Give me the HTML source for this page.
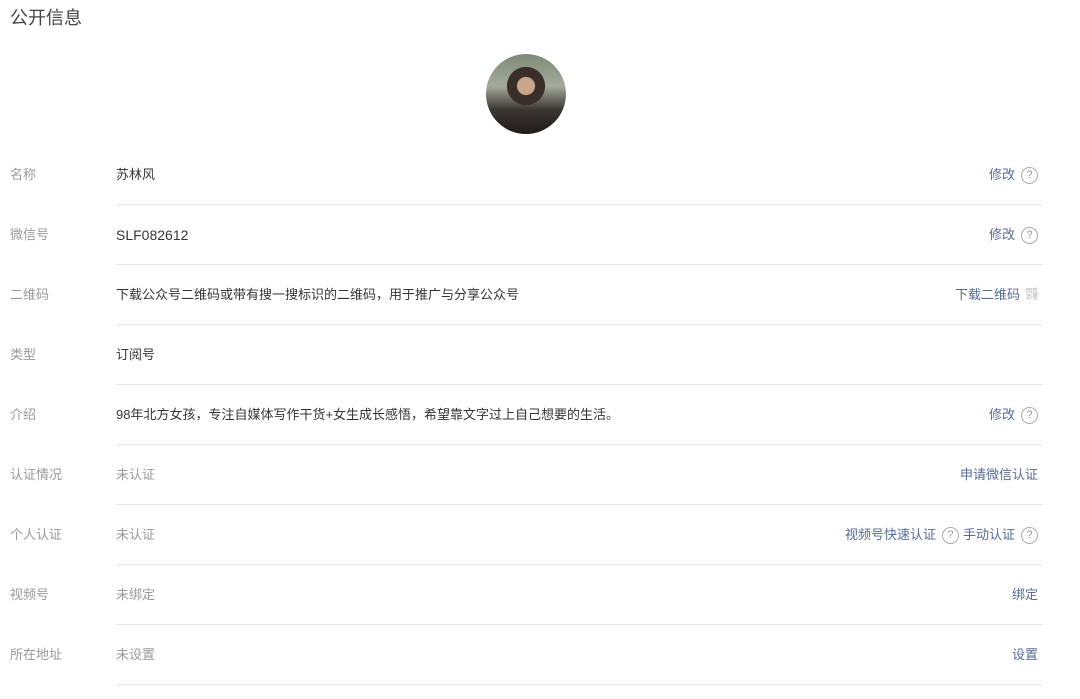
<!DOCTYPE html>
<html><head><meta charset="utf-8"><style>
body{margin:0;width:1080px;height:685px;background:#fff;font-family:"Liberation Sans","Noto Sans CJK SC",sans-serif;position:relative;overflow:hidden}
.t{position:absolute;left:10px;top:4px;font-size:18px;color:#444}
.av{position:absolute;left:486px;top:54px;width:80px;height:80px;border-radius:50%;background:radial-gradient(circle at 50% 40%,#c9a58e 0 14%,#3a2e28 15% 30%,transparent 31%),linear-gradient(180deg,#7d8a78 0%,#a4ab9c 40%,#3b3532 70%,#1f1b1a 100%);overflow:hidden}
.row{position:absolute;left:0;width:1042px;height:60px;font-size:13px}
.row .l{position:absolute;left:10px;top:1px;line-height:30px;color:#9a9a9a}
.row .v{position:absolute;left:116px;top:1px;line-height:30px;color:#353535}
.row .v.g{color:#9a9a9a}
.row .r{position:absolute;right:4px;top:1px;line-height:30px;color:#576b95;display:flex;align-items:center;gap:4px}
.row .line{position:absolute;left:116px;right:0;top:45px;border-top:1px solid #e7e7e7}
.q{display:inline-block;width:15px;height:15px;border:1px solid #aaa;border-radius:50%;font-size:11px;line-height:15px;text-align:center;color:#999;margin-left:2px}
.qr{display:inline-block;width:12px;height:12px;font-size:6px;line-height:6px;color:#aaa;margin-left:2px}
</style></head><body>
<div class="t">公开信息</div>
<div class="av"></div>
<div class="row" style="top:159px"><span class="l">名称</span><span class="v">苏林风</span><span class="r">修改<span class="q">?</span></span><div class="line"></div></div>
<div class="row" style="top:219px"><span class="l">微信号</span><span class="v" style="font-size:14px">SLF082612</span><span class="r">修改<span class="q">?</span></span><div class="line"></div></div>
<div class="row" style="top:279px"><span class="l">二维码</span><span class="v">下载公众号二维码或带有搜一搜标识的二维码，用于推广与分享公众号</span><span class="r">下载二维码<span class="qr">回㐬<br>沥卺</span></span><div class="line"></div></div>
<div class="row" style="top:339px"><span class="l">类型</span><span class="v">订阅号</span><div class="line"></div></div>
<div class="row" style="top:399px"><span class="l">介绍</span><span class="v">98年北方女孩，专注自媒体写作干货+女生成长感悟，希望靠文字过上自己想要的生活。</span><span class="r">修改<span class="q">?</span></span><div class="line"></div></div>
<div class="row" style="top:459px"><span class="l">认证情况</span><span class="v g">未认证</span><span class="r">申请微信认证</span><div class="line"></div></div>
<div class="row" style="top:519px"><span class="l">个人认证</span><span class="v g">未认证</span><span class="r">视频号快速认证<span class="q">?</span>手动认证<span class="q">?</span></span><div class="line"></div></div>
<div class="row" style="top:579px"><span class="l">视频号</span><span class="v g">未绑定</span><span class="r">绑定</span><div class="line"></div></div>
<div class="row" style="top:639px"><span class="l">所在地址</span><span class="v g">未设置</span><span class="r">设置</span><div class="line"></div></div>
</body></html>
